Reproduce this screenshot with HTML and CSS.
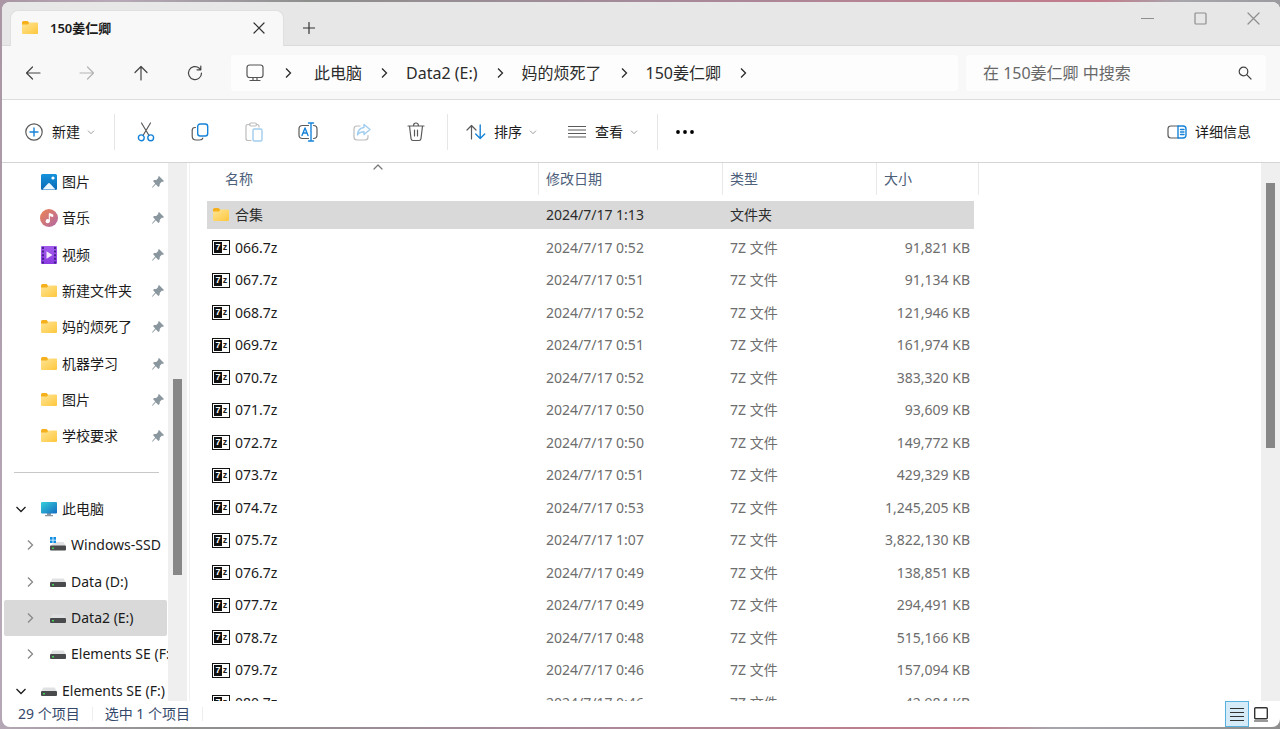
FILE: index.html
```html
<!DOCTYPE html>
<html lang="zh-CN">
<head>
<meta charset="utf-8">
<title>150姜仁卿</title>
<link rel="stylesheet" href="styles.css">
</head>
<body>
<svg class="sprite" aria-hidden="true">
  <defs>
    <linearGradient id="g-folder" x1="0" y1="0" x2="1" y2="1"><stop offset="0" stop-color="#ffe596"/><stop offset="1" stop-color="#fdc73c"/></linearGradient>
    <linearGradient id="g-pic" x1="0" y1="0" x2="0" y2="1"><stop offset="0" stop-color="#1593dc"/><stop offset="1" stop-color="#0d68b4"/></linearGradient>
    <linearGradient id="g-music" x1="0" y1="0" x2="1" y2="1"><stop offset="0" stop-color="#ee8450"/><stop offset="1" stop-color="#b068a8"/></linearGradient>
    <linearGradient id="g-video" x1="0" y1="0" x2="0" y2="1"><stop offset="0" stop-color="#a35cec"/><stop offset="1" stop-color="#8a3be0"/></linearGradient>
    <linearGradient id="g-pc" x1="0" y1="0" x2="1" y2="1"><stop offset="0" stop-color="#36d0dc"/><stop offset="1" stop-color="#146cc0"/></linearGradient>
  </defs>
  <symbol id="folder" viewBox="0 0 18 16"><path d="M1 2.500Q1 1 2.500 1H6.500L8 2.500V5H1z" fill="#f5b01c"/><path d="M1 4.500H7L8.500 2.600H16Q17 2.600 17 3.600V13Q17 14 16 14H2Q1 14 1 13z" fill="url(#g-folder)"/></symbol>
  <symbol id="picture" viewBox="0 0 18 18"><rect x="1" y="1" width="16" height="16" rx="1.500" fill="url(#g-pic)"/><path d="M2.500 16.500L8 10.500Q9 9.500 10 10.500L15.500 16.500z" fill="#eef8ff"/><circle cx="13" cy="5" r="1.600" fill="#fff"/></symbol>
  <symbol id="music" viewBox="0 0 18 18"><circle cx="9" cy="9" r="9" fill="url(#g-music)"/><path d="M9.300 12V4.500L12.800 5.800V7.600L9.800 6.600" fill="#fff" stroke="#fff" stroke-width="1"/><circle cx="7.700" cy="12.200" r="2.100" fill="#fff"/></symbol>
  <symbol id="video" viewBox="0 0 18 18"><rect x="1" width="16" height="18" rx="1" fill="url(#g-video)"/><path d="M3 1V18M15 1V18" stroke="#46208c" stroke-width="2" stroke-dasharray="2 1.600"/><path d="M6.500 5.300V12.700L12.500 9z" fill="#f1e8fc"/></symbol>
  <symbol id="pc" viewBox="0 0 18 16"><path d="M7 12H11V14H13V15.300H5V14H7z" fill="#8b969e"/><rect x="1" y="1" width="16" height="11.500" rx="1" fill="url(#g-pc)"/></symbol>
  <symbol id="drive" viewBox="0 0 18 16"><path d="M3.500 4.500H14.500L17 8.500H1z" fill="#dfe1e3"/><rect x="1" y="8" width="16" height="5" rx="1" fill="#484a4b"/><rect x="3" y="10" width="2" height="1.500" fill="#45d15a"/></symbol>
  <symbol id="windrive" viewBox="0 0 18 16"><path d="M6 5H14.500L17 9H1z" fill="#dfe1e3"/><rect x="1" y="8.500" width="16" height="5" rx="1" fill="#484a4b"/><rect x="3" y="10.500" width="2" height="1.500" fill="#45d15a"/><path d="M1 0H3.600V2.700H1zM4.400 0H7V2.700H4.400zM1 3.400H3.600V6H1zM4.400 3.400H7V6H4.400z" fill="#108fe5"/></symbol>
  <symbol id="pin" viewBox="0 0 14 14"><path d="M8 1L13 6L11.800 7L11 6.600L8.800 8.800L8.600 11L7.300 12L4.800 9.200L1.600 12.800L1 12.300L4.200 8.500L2 6L3.200 5H5.300L7.400 2.800L7 2z" fill="#8a979e"/></symbol>
  <symbol id="right" viewBox="0 0 12 12"><path d="M4 1.500L8.500 6L4 10.500" fill="none" stroke="currentColor" stroke-width="1.300"/></symbol>
  <symbol id="down" viewBox="0 0 12 12"><path d="M1.500 4L6 8.500L10.500 4" fill="none" stroke="currentColor" stroke-width="1.300"/></symbol>
</svg>

<div class="window">
  <header class="titlebar">
    <div class="tab">
      <svg class="i18" viewBox="0 0 18 16"><use href="#folder"/></svg>
      <span class="tab-title">150姜仁卿</span>
      <button class="tab-close" aria-label="关闭标签页"><svg width="12" height="12" viewBox="0 0 12 12"><path d="M1 1L11 11M11 1L1 11" class="ln"/></svg></button>
    </div>
    <button class="new-tab" aria-label="新标签页"><svg width="12" height="12" viewBox="0 0 12 12"><path d="M6 .5V11.500M.5 6H11.500" class="ln"/></svg></button>
    <div class="controls">
      <button aria-label="最小化"><svg width="13" height="13" viewBox="0 0 13 13"><path d="M.5 6.500H12.500" class="ln"/></svg></button>
      <button aria-label="最大化"><svg width="13" height="13" viewBox="0 0 13 13"><rect x="1" y="1" width="11" height="11" rx="1" class="ln"/></svg></button>
      <button aria-label="关闭"><svg width="13" height="13" viewBox="0 0 13 13"><path d="M1 1L12 12M12 1L1 12" class="ln"/></svg></button>
    </div>
  </header>

  <nav class="navbar" aria-label="导航">
    <div class="history">
      <button aria-label="后退"><svg width="16" height="16" viewBox="0 0 16 16"><path d="M15 8H1.500M7.500 2L1.500 8L7.500 14" class="ln"/></svg></button>
      <button aria-label="前进" disabled><svg width="16" height="16" viewBox="0 0 16 16"><path d="M1 8H14.500M8.500 2L14.500 8L8.500 14" class="ln"/></svg></button>
      <button aria-label="向上"><svg width="16" height="16" viewBox="0 0 16 16"><path d="M8 15V1.500M2 7.500L8 1.500L14 7.500" class="ln"/></svg></button>
      <button aria-label="刷新"><svg width="16" height="16" viewBox="0 0 16 16"><path d="M14.500 8A6.500 6.500 0 1 1 12.300 3.200L13.800 4.800M13.800 1V4.800H10" class="ln"/></svg></button>
    </div>
    <div class="address">
      <svg class="monitor" width="18" height="18" viewBox="0 0 18 18"><rect x="1" y="1" width="16" height="12.500" rx="2.500" class="ln"/><path d="M4 16.500H14M7 13.500V16.500M11 13.500V16.500" class="ln"/></svg>
      <svg class="sep" viewBox="0 0 12 12"><use href="#right"/></svg>
      <button>此电脑</button>
      <svg class="sep" viewBox="0 0 12 12"><use href="#right"/></svg>
      <button>Data2 (E:)</button>
      <svg class="sep" viewBox="0 0 12 12"><use href="#right"/></svg>
      <button>妈的烦死了</button>
      <svg class="sep" viewBox="0 0 12 12"><use href="#right"/></svg>
      <button>150姜仁卿</button>
      <svg class="sep" viewBox="0 0 12 12"><use href="#right"/></svg>
    </div>
    <label class="search">
      <input type="text" placeholder="在 150姜仁卿 中搜索" aria-label="搜索">
      <svg width="14" height="14" viewBox="0 0 14 14"><circle cx="5.500" cy="5.500" r="4.300" class="ln"/><path d="M8.700 8.700L13 13" class="ln"/></svg>
    </label>
  </nav>

  <div class="toolbar" role="toolbar" aria-label="命令">
    <button class="cmd new"><svg width="18" height="18" viewBox="0 0 18 18"><circle cx="9" cy="9" r="8.200" class="ln"/><path d="M9 5V13M5 9H13" class="bl"/></svg><span>新建</span><svg class="chev" viewBox="0 0 12 12"><use href="#down"/></svg></button>
    <span class="rule"></span>
    <div class="icons">
      <button aria-label="剪切"><svg width="18" height="20" viewBox="0 0 18 20"><path d="M4.500 1L12 13.500M13.500 1L6 13.500" class="ln"/><circle cx="4.300" cy="15.800" r="2.900" class="bl"/><circle cx="13.700" cy="15.800" r="2.900" class="bl"/></svg></button>
      <button aria-label="复制"><svg width="18" height="18" viewBox="0 0 18 18"><rect x="6.700" y="1" width="10" height="12" rx="2.500" class="bl"/><path d="M4.500 4.500H4Q1.200 4.500 1.200 7.500V13Q1.200 17 5 17H8.500Q11.500 17 11.800 15" class="ln"/></svg></button>
      <button aria-label="粘贴" disabled><svg width="18" height="20" viewBox="0 0 18 20"><path d="M5 2.500H3Q1 2.500 1 4.500V16.500Q1 18.500 3 18.500H6M11.500 2.500H12Q14 2.500 14 4.500V5" class="ln"/><rect x="4.500" y="1" width="7" height="3" rx="1.500" class="ln"/><rect x="8" y="7" width="9" height="12" rx="1.500" class="bl"/></svg></button>
      <button aria-label="重命名"><svg width="20" height="20" viewBox="0 0 20 20"><path d="M10.500 3.500H4.500Q1 3.500 1 7V13Q1 16.500 4.500 16.500H10.500M15.500 3.500Q19 3.500 19 7V13Q19 16.500 15.500 16.500" class="ln"/><path d="M13 1V19M10.500 1H15.500M10.500 19H15.500" class="bl"/><path d="M4 13.500L7 6L10 13.500M5 11H9" class="bl"/></svg></button>
      <button aria-label="共享" disabled><svg width="18" height="18" viewBox="0 0 18 18"><path d="M7 3H4Q1 3 1 6V14Q1 17 4 17H12Q15 17 15 14V12.500" class="ln"/><path d="M11 1.500L17 6.500L11 11.500V8.800Q6.500 8.800 4.500 12Q5 5 11 4.500z" class="bl"/></svg></button>
      <button aria-label="删除"><svg width="18" height="20" viewBox="0 0 18 20"><path d="M1 4H17M6.500 4Q6.500 1 9 1Q11.500 1 11.500 4M2.500 4L4 16.500Q4.200 18.500 6 18.500H12Q13.800 18.500 14 16.500L15.500 4M7.500 8V14M10.500 8V14" class="ln"/></svg></button>
    </div>
    <span class="rule"></span>
    <button class="cmd sort"><svg width="20" height="16" viewBox="0 0 20 16"><path d="M5.500 15V1.500M1 6L5.500 1.500L10 6" class="ln"/><path d="M14.200 1V14.500M9.700 10L14.200 14.500L18.700 10" class="bl"/></svg><span>排序</span><svg class="chev" viewBox="0 0 12 12"><use href="#down"/></svg></button>
    <button class="cmd view"><svg width="18" height="14" viewBox="0 0 18 14"><path d="M0 1.500H18M0 5H18M0 8.500H18M0 12H18" class="ln"/></svg><span>查看</span><svg class="chev" viewBox="0 0 12 12"><use href="#down"/></svg></button>
    <span class="rule"></span>
    <button class="more" aria-label="更多"><svg width="20" height="6" viewBox="0 0 20 6"><circle cx="3" cy="3" r="1.900"/><circle cx="10" cy="3" r="1.900"/><circle cx="17" cy="3" r="1.900"/></svg></button>
    <button class="cmd details"><svg width="20" height="14" viewBox="0 0 20 14"><path d="M11 1H4Q1 1 1 4V10Q1 13 4 13H11" class="ln"/><path d="M11 1H16Q19 1 19 4V10Q19 13 16 13H11zM13.500 4.500H17M13.500 7H17M13.500 9.500H17" class="bl"/></svg><span>详细信息</span></button>
  </div>

  <div class="body">
    <aside class="sidebar">
      <ul class="tree">
        <li><button><svg class="i18" viewBox="0 0 18 18"><use href="#picture"/></svg><span>图片</span><svg class="pin" viewBox="0 0 14 14"><use href="#pin"/></svg></button></li>
        <li><button><svg class="i18" viewBox="0 0 18 18"><use href="#music"/></svg><span>音乐</span><svg class="pin" viewBox="0 0 14 14"><use href="#pin"/></svg></button></li>
        <li><button><svg class="i18" viewBox="0 0 18 18"><use href="#video"/></svg><span>视频</span><svg class="pin" viewBox="0 0 14 14"><use href="#pin"/></svg></button></li>
        <li><button><svg class="i18" viewBox="0 0 18 16"><use href="#folder"/></svg><span>新建文件夹</span><svg class="pin" viewBox="0 0 14 14"><use href="#pin"/></svg></button></li>
        <li><button><svg class="i18" viewBox="0 0 18 16"><use href="#folder"/></svg><span>妈的烦死了</span><svg class="pin" viewBox="0 0 14 14"><use href="#pin"/></svg></button></li>
        <li><button><svg class="i18" viewBox="0 0 18 16"><use href="#folder"/></svg><span>机器学习</span><svg class="pin" viewBox="0 0 14 14"><use href="#pin"/></svg></button></li>
        <li><button><svg class="i18" viewBox="0 0 18 16"><use href="#folder"/></svg><span>图片</span><svg class="pin" viewBox="0 0 14 14"><use href="#pin"/></svg></button></li>
        <li><button><svg class="i18" viewBox="0 0 18 16"><use href="#folder"/></svg><span>学校要求</span><svg class="pin" viewBox="0 0 14 14"><use href="#pin"/></svg></button></li>
      </ul>
      <hr>
      <ul class="tree">
        <li><button class="root"><svg class="arrow" viewBox="0 0 12 12"><use href="#down"/></svg><svg class="i18" viewBox="0 0 18 16"><use href="#pc"/></svg><span>此电脑</span></button></li>
        <li><button class="child"><svg class="arrow" viewBox="0 0 12 12"><use href="#right"/></svg><svg class="i18" viewBox="0 0 18 16"><use href="#windrive"/></svg><span>Windows-SSD</span></button></li>
        <li><button class="child"><svg class="arrow" viewBox="0 0 12 12"><use href="#right"/></svg><svg class="i18" viewBox="0 0 18 16"><use href="#drive"/></svg><span>Data (D:)</span></button></li>
        <li><button class="child current"><svg class="arrow" viewBox="0 0 12 12"><use href="#right"/></svg><svg class="i18" viewBox="0 0 18 16"><use href="#drive"/></svg><span>Data2 (E:)</span></button></li>
        <li><button class="child"><svg class="arrow" viewBox="0 0 12 12"><use href="#right"/></svg><svg class="i18" viewBox="0 0 18 16"><use href="#drive"/></svg><span>Elements SE (F:)</span></button></li>
        <li><button class="root"><svg class="arrow" viewBox="0 0 12 12"><use href="#down"/></svg><svg class="i18" viewBox="0 0 18 16"><use href="#drive"/></svg><span>Elements SE (F:)</span></button></li>
      </ul>
    </aside>
    <div class="scroll side"><div class="thumb"></div></div>
    <main class="files">
      <table>
        <colgroup><col class="c-name"><col class="c-date"><col class="c-type"><col class="c-size"></colgroup>
        <thead><tr><th class="name" scope="col">名称<svg class="sorted" viewBox="0 0 10 6"><path d="M1 5L5 1L9 5" class="ln"/></svg></th><th scope="col">修改日期</th><th scope="col">类型</th><th scope="col">大小</th></tr></thead>
        <tbody>
          <tr class="selected"><td><div><svg class="i18" viewBox="0 0 18 16"><use href="#folder"/></svg>合集</div></td><td>2024/7/17 1:13</td><td>文件夹</td><td></td></tr>
          <tr><td><div><span class="arch" aria-hidden="true"><b>7</b><i>z</i></span>066.7z</div></td><td>2024/7/17 0:52</td><td>7Z 文件</td><td>91,821 KB</td></tr>
          <tr><td><div><span class="arch" aria-hidden="true"><b>7</b><i>z</i></span>067.7z</div></td><td>2024/7/17 0:51</td><td>7Z 文件</td><td>91,134 KB</td></tr>
          <tr><td><div><span class="arch" aria-hidden="true"><b>7</b><i>z</i></span>068.7z</div></td><td>2024/7/17 0:52</td><td>7Z 文件</td><td>121,946 KB</td></tr>
          <tr><td><div><span class="arch" aria-hidden="true"><b>7</b><i>z</i></span>069.7z</div></td><td>2024/7/17 0:51</td><td>7Z 文件</td><td>161,974 KB</td></tr>
          <tr><td><div><span class="arch" aria-hidden="true"><b>7</b><i>z</i></span>070.7z</div></td><td>2024/7/17 0:52</td><td>7Z 文件</td><td>383,320 KB</td></tr>
          <tr><td><div><span class="arch" aria-hidden="true"><b>7</b><i>z</i></span>071.7z</div></td><td>2024/7/17 0:50</td><td>7Z 文件</td><td>93,609 KB</td></tr>
          <tr><td><div><span class="arch" aria-hidden="true"><b>7</b><i>z</i></span>072.7z</div></td><td>2024/7/17 0:50</td><td>7Z 文件</td><td>149,772 KB</td></tr>
          <tr><td><div><span class="arch" aria-hidden="true"><b>7</b><i>z</i></span>073.7z</div></td><td>2024/7/17 0:51</td><td>7Z 文件</td><td>429,329 KB</td></tr>
          <tr><td><div><span class="arch" aria-hidden="true"><b>7</b><i>z</i></span>074.7z</div></td><td>2024/7/17 0:53</td><td>7Z 文件</td><td>1,245,205 KB</td></tr>
          <tr><td><div><span class="arch" aria-hidden="true"><b>7</b><i>z</i></span>075.7z</div></td><td>2024/7/17 1:07</td><td>7Z 文件</td><td>3,822,130 KB</td></tr>
          <tr><td><div><span class="arch" aria-hidden="true"><b>7</b><i>z</i></span>076.7z</div></td><td>2024/7/17 0:49</td><td>7Z 文件</td><td>138,851 KB</td></tr>
          <tr><td><div><span class="arch" aria-hidden="true"><b>7</b><i>z</i></span>077.7z</div></td><td>2024/7/17 0:49</td><td>7Z 文件</td><td>294,491 KB</td></tr>
          <tr><td><div><span class="arch" aria-hidden="true"><b>7</b><i>z</i></span>078.7z</div></td><td>2024/7/17 0:48</td><td>7Z 文件</td><td>515,166 KB</td></tr>
          <tr><td><div><span class="arch" aria-hidden="true"><b>7</b><i>z</i></span>079.7z</div></td><td>2024/7/17 0:46</td><td>7Z 文件</td><td>157,094 KB</td></tr>
          <tr><td><div><span class="arch" aria-hidden="true"><b>7</b><i>z</i></span>080.7z</div></td><td>2024/7/17 0:46</td><td>7Z 文件</td><td>42,984 KB</td></tr>
        </tbody>
      </table>
    </main>
    <div class="scroll main"><div class="thumb"></div></div>
  </div>

  <footer class="status">
    <span>29 个项目</span>
    <span>选中 1 个项目</span>
    <div class="modes">
      <button class="on" aria-label="详细信息视图"><svg width="14" height="14" viewBox="0 0 14 14"><path d="M0 1.500H14M0 5.500H14M0 9.500H14M0 13.500H14" stroke="#333"/></svg></button>
      <button aria-label="大图标视图"><svg width="14" height="15" viewBox="0 0 14 15"><rect x=".7" y=".7" width="12.600" height="11" rx="1" fill="#fff" stroke="#333" stroke-width="1.400"/><path d="M0 14H14" stroke="#333"/></svg></button>
    </div>
  </footer>
</div>
</body>
</html>
```
FILE: styles.css
```css
* { box-sizing: border-box; }

body {
  margin: 0;
  height: 100vh;
  padding: 2px 0 2px 2px;
  background: linear-gradient(100deg, #a995a4 0%, #b8a9b8 8%, #8d8f8d 22%, #a58b9b 45%, #c27c8c 78%, #a6a6ac 84%, #8e8e8e 100%);
  font: 14px/20px "Noto Sans", "Noto Sans CJK SC", sans-serif;
  color: #1b1b1b;
  overflow: hidden;
}

button {
  display: flex;
  align-items: center;
  justify-content: center;
  border: 0;
  padding: 0;
  background: none;
  font: inherit;
  color: inherit;
  white-space: nowrap;
}

svg { flex: none; display: block; }
.sprite { position: absolute; width: 0; height: 0; }
.ln { fill: none; stroke: currentColor; stroke-width: 1.2; stroke-linejoin: round; stroke-linecap: round; }
.bl { fill: none; stroke: #1683d8; stroke-width: 1.4; stroke-linejoin: round; stroke-linecap: round; }
.i18 { width: 18px; height: 18px; }

.window {
  display: flex;
  flex-direction: column;
  height: 100%;
  background: #fff;
  border-radius: 8px;
  overflow: hidden;
}

/* Title bar */
.titlebar {
  display: flex;
  flex: none;
  height: 44px;
  padding-left: 8px;
  background: #e7e7e7;
  box-shadow: inset 0 -1px #dadada;
}
.tab {
  display: flex;
  align-items: center;
  width: 274px;
  margin-top: 8px;
  padding: 0 18px 2px 10px;
  border: 1px solid #e0e0e0;
  border-bottom: 0;
  border-radius: 8px 8px 0 0;
  background: #f8f8f8;
}
.tab-title { flex: 1; margin-left: 11px; font-size: 13px; font-weight: 600; }
.new-tab { width: 50px; margin-top: 8px; color: #333; }
.tab-close { color: #333; }
.controls { display: flex; margin-left: auto; height: 32px; color: #8e8e8e; }
.controls button { width: 53px; }

/* Navigation */
.navbar {
  display: flex;
  flex: none;
  align-items: center;
  gap: 8px;
  height: 54px;
  padding-right: 14px;
  background: #f8f8f8;
  border-bottom: 1px solid #dcdcdc;
}
.history { display: flex; width: 221px; padding-left: 4px; color: #444; }
.history button { width: 54px; height: 36px; }
.history button:disabled { color: #b4b4b4; }
.address {
  display: flex;
  flex: 1;
  align-items: center;
  height: 36px;
  padding-left: 15px;
  border-radius: 4px;
  background: #fdfdfd;
  font-size: 16px;
  color: #2b2b2b;
}
.monitor { margin-right: 9px; color: #555; }
.sep { width: 12px; height: 12px; margin: 0 16px; }
.monitor + .sep { margin-left: 9px; margin-right: 20px; }
.search {
  display: flex;
  align-items: center;
  width: 300px;
  height: 36px;
  padding: 0 14px 0 17px;
  border-radius: 4px;
  background: #fdfdfd;
  color: #444;
}
.search input {
  flex: 1;
  min-width: 0;
  border: 0;
  padding: 0;
  outline: 0;
  background: none;
  font: inherit;
  font-size: 16px;
}
.search input::placeholder { color: #686868; opacity: 1; }

/* Command bar */
.toolbar {
  display: flex;
  flex: none;
  align-items: center;
  height: 63px;
  padding: 1px 29px 0 23px;
  border-bottom: 1px solid #d4d4d4;
}
.cmd svg:first-child, .icons svg { color: #5a5a5a; }
.cmd span { margin-left: 9px; }
.chev { width: 8px; height: 8px; margin-left: 7px; color: #8a8a8a; }
.rule { width: 1px; height: 36px; background: #e6e6e6; }
.new { margin-right: 19px; }
.icons { display: flex; padding: 0 4px 0 4px; }
.icons button { width: 54px; height: 36px; }
.icons button:disabled { opacity: .4; }
.sort { margin: 0 31px 0 18px; }
.sort span { margin-left: 8px; }
.view { margin-right: 19px; }
.more { margin-left: 17px; }
.details { margin-left: auto; }
.details span { margin-left: 8px; }

/* Content */
.body { display: flex; flex: 1; min-height: 0; }
.sidebar { width: 166px; overflow: hidden; }
.tree { margin: 0; padding: 1px 0 0; list-style: none; }
.tree button {
  justify-content: flex-start;
  width: 163px;
  height: 36px;
  margin-left: 2px;
  padding: 0 2px 0 36px;
}
.tree li:nth-child(3n) button { height: 37px; }
.tree span { margin-left: 4px; }
.pin { width: 14px; height: 14px; margin-left: auto; }
.sidebar hr { height: 1px; margin: 18px 9px 17px 12px; border: 0; background: #c8c8c8; }
.tree .root { padding-left: 11px; }
.root .arrow { width: 12px; height: 12px; margin-right: 13px; }
.tree .child { padding-left: 20px; }
.child .arrow { width: 12px; height: 12px; margin-right: 13px; color: #888; }
.tree .current { background: #d9d9d9; border-radius: 2px; }

.scroll { flex: none; width: 19px; background: #efefef; }
.thumb { width: 9px; background: #878787; }
.side .thumb { height: 196px; margin: 216px 0 0 5px; }
.main .thumb { height: 265px; margin: 20px 0 0 5px; }

.files { flex: 1; overflow: hidden; margin-left: 2px; padding-left: 17px; border-left: 1px solid #f1f1f1; }
.files table { width: 767px; table-layout: fixed; border-spacing: 0 4px; margin-top: -4px; }
.c-name { width: 332px; }
.c-date { width: 184px; }
.c-type { width: 154px; }
.c-size { width: 97px; }
.files th {
  position: relative;
  height: 34px;
  padding: 0 0 2px 7px;
  text-align: left;
  font-weight: 400;
  color: #4c607a;
}
.files th::after { content: ""; position: absolute; top: 0; right: 0; width: 1px; height: 32px; background: #e8e8e8; }
.files th:last-child::after { right: -5px; }
.files th.name { padding-left: 18px; }
.sorted { position: absolute; top: 1px; left: 50%; width: 10px; height: 6px; color: #777; }
.files td { height: 28px; padding: 0 0 0 7px; color: #6d6d6d; }
.files tr:nth-child(even) td { height: 29px; }
.files td:first-child { padding-left: 5px; color: #1b1b1b; }
.files td div { display: flex; align-items: center; gap: 5px; }
.files td:last-child { padding-right: 4px; text-align: right; }
.files .selected td { background: #d9d9d9; color: #2b2b2b; }
.arch {
  display: flex;
  width: 18px;
  height: 15px;
  padding: 1px;
  border: 1px solid #111;
  font: 700 9px/11px "Liberation Sans", sans-serif;
}
.arch b { width: 8px; height: 11px; background: #111; color: #fff; text-align: center; }
.arch i { flex: 1; font-style: normal; text-align: center; }

/* Status bar */
.status { display: flex; flex: none; align-items: center; height: 26px; padding-left: 16px; color: #34496a; }
.status span { margin-right: 12px; padding-right: 12px; border-right: 1px solid #eee; line-height: 14px; }
.modes { display: flex; height: 26px; margin-left: auto; padding-right: 7px; }
.modes button { width: 24px; }
.modes .on { border: 1px solid #58b0df; background: #d5ecf8; }
```
